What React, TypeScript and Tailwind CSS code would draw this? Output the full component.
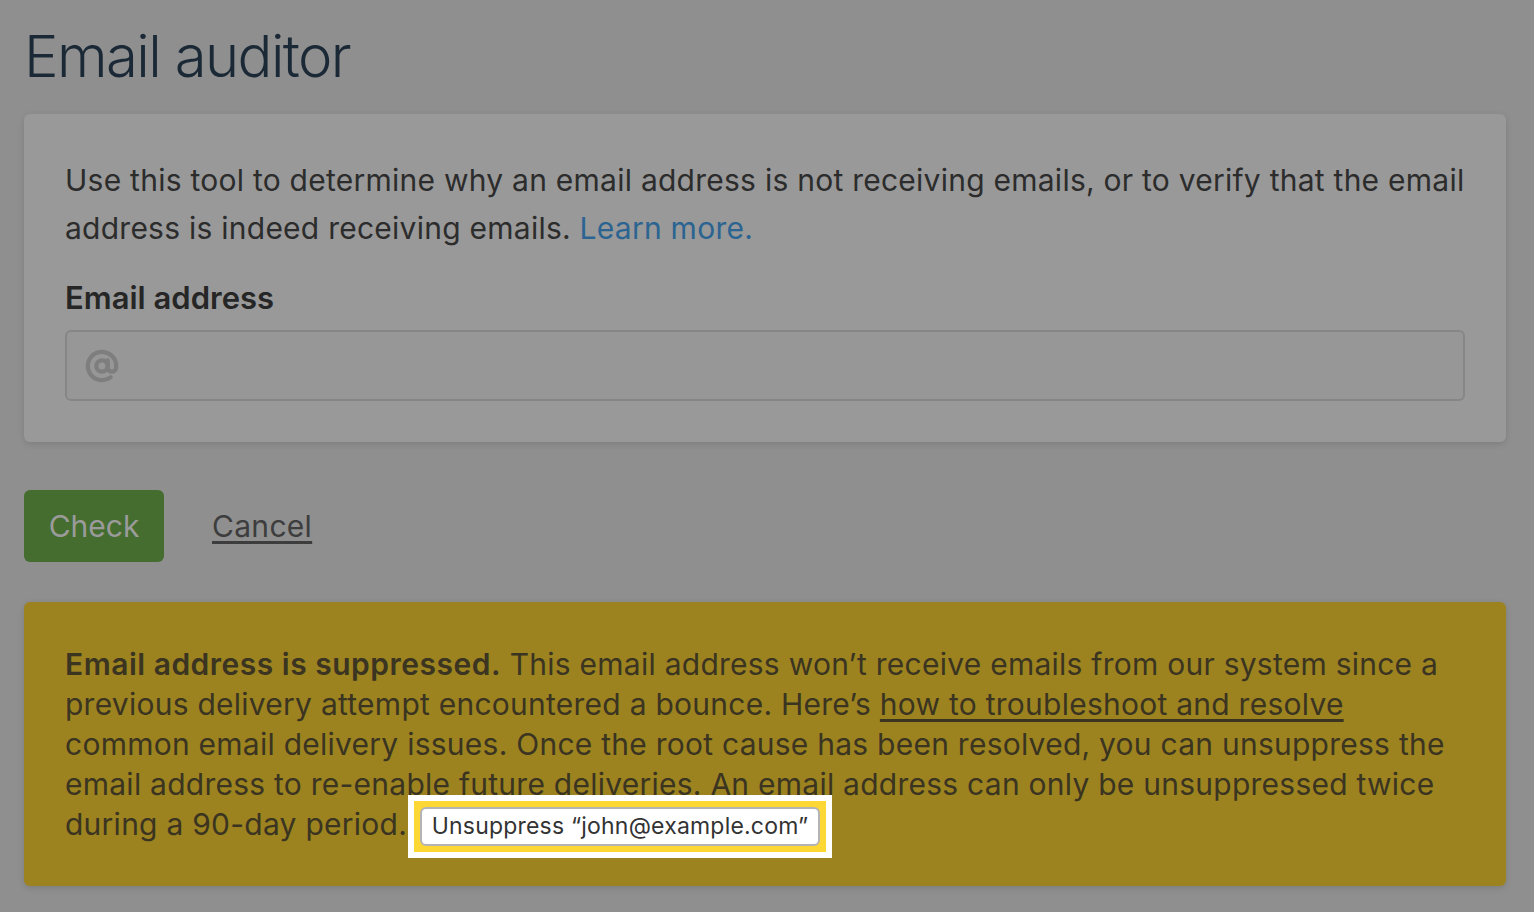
export default function App() {
  return (
    <div className="min-h-[912px] bg-[#8f8f8f] pl-6 pr-7 pt-[21px] font-['Inter','Noto_Sans',sans-serif]">
      <h1 className="text-[58px] font-light leading-[70px] tracking-[-1.6px] text-[#1b2936]">Email auditor</h1>

      <div className="mt-[23px] rounded-md bg-[#999999] px-[41px] pb-[41px] pt-[42px] shadow-[0_2px_6px_rgba(0,0,0,0.12)]">
        <p className="text-[30px] leading-[48px] tracking-[0.25px] text-[#2c2c2c]">
          Use this tool to determine why an email address is not receiving emails, or to verify that the email
          address is indeed receiving emails. <span className="text-[#2b6491]">Learn more.</span>
        </p>
        <label className="mt-[26px] block text-[31px] font-semibold leading-[40px] text-[#262626]">Email address</label>
        <div className="mt-3 flex h-[71px] items-center rounded-md border-2 border-[#868686] bg-[#979797] px-[18px]">
          <svg width="34" height="34" viewBox="0 0 24 24" fill="none" stroke="#7e7e7e" strokeWidth="3" strokeLinecap="round">
            <circle cx="12" cy="12" r="4" />
            <path d="M16 8v5a3 3 0 0 0 6 0v-1a10 10 0 1 0-4 8" />
          </svg>
        </div>
      </div>

      <div className="mt-12 flex items-center gap-12">
        <button className="h-[72px] w-[140px] rounded-md bg-[#456d2f] text-[30px] text-[#9b9b9b]">Check</button>
        <a className="text-[30px] tracking-[0.3px] text-[#3d3d3d] underline underline-offset-4">Cancel</a>
      </div>

      <div className="mt-10 rounded-md bg-[#9c8320] px-[41px] pb-[40px] pt-[42px] shadow-[0_2px_6px_rgba(0,0,0,0.12)]">
        <p className="text-[30px] leading-[40px] tracking-[0.25px] text-[#3a3420]">
          <span className="font-semibold tracking-[0.5px]">Email address is suppressed.</span> This email address won’t
          receive emails from our system since a previous delivery attempt encountered a bounce. Here’s{" "}
          <span className="underline underline-offset-4">how to troubleshoot and resolve</span> common email delivery
          issues. Once the root cause has been resolved, you can unsuppress the email address to re-enable future
          deliveries. An email address can only be unsuppressed twice during a 90-day period.{" "}
          <span className="relative z-10 -my-3 ml-[-8px] inline-block bg-white p-1.5 align-middle">
            <span className="block bg-[#fdd835] p-1.5">
              <button className="block h-[39px] rounded-md border-2 border-[#b4b4b4] bg-white px-[10px] text-[23px] leading-[35px] tracking-[0.2px] text-[#333333]">
                Unsuppress “john@example.com”
              </button>
            </span>
          </span>
        </p>
      </div>
    </div>
  );
}
